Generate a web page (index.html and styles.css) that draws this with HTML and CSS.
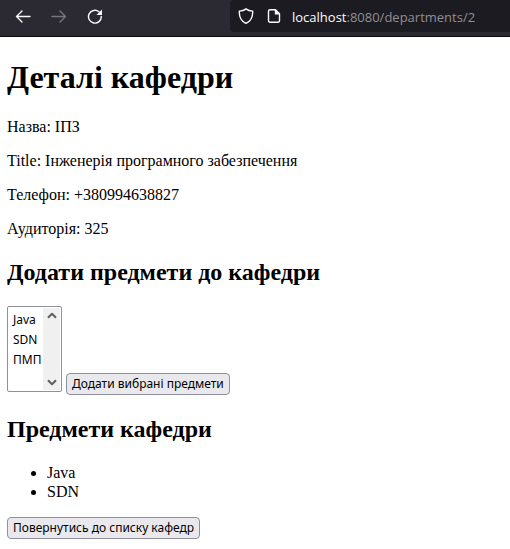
FILE: index.html
```html
<!DOCTYPE html>
<html lang="uk">
<head>
<meta charset="utf-8">
<title>Деталі кафедри</title>
<link rel="stylesheet" href="styles.css">
</head>
<body>
<header class="toolbar">
  <nav class="nav-buttons">
    <button type="button" class="nav-button" aria-label="Назад">
      <svg viewBox="0 0 16 16"><path d="M15 8.5H1.5M7 3L1.5 8.5L7 14"/></svg>
    </button>
    <button type="button" class="nav-button" aria-label="Вперед" disabled>
      <svg viewBox="0 0 16 16"><path d="M1 8.5H14.5M9 3L14.5 8.5L9 14"/></svg>
    </button>
    <button type="button" class="nav-button" aria-label="Оновити">
      <svg viewBox="0 0 16 16"><path d="M14.3 8.5A6.4 6.4 0 1 1 12 3.8"/><path class="solid" d="M15 1.5V7H9.5Z"/></svg>
    </button>
  </nav>
  <div class="address-bar">
    <svg class="address-icon" viewBox="0 0 16 16"><path d="M8 .9C6.300 2.300 3.900 3 1.300 3.100C1.100 8.500 2.800 13 8 15.400C13.200 13 14.900 8.500 14.700 3.100C12.100 3 9.700 2.300 8 .9Z"/></svg>
    <svg class="address-icon" viewBox="0 0 16 16"><path d="M9.500 1.700H4A1.500 1.500 0 0 0 2.500 3.200V12.800A1.500 1.500 0 0 0 4 14.300H12A1.500 1.500 0 0 0 13.500 12.800V5.700Z"/><path class="solid" d="M8.800 1.500V6.500H13.800Z"/></svg>
    <span class="url"><span class="host">localhost</span>:8080/departments/2</span>
  </div>
</header>
<main class="page">
  <h1>Деталі кафедри</h1>
  <p>Назва: ІПЗ</p>
  <p>Title: Інженерія програмного забезпечення</p>
  <p>Телефон: +380994638827</p>
  <p>Аудиторія: 325</p>
  <h2 id="add-title">Додати предмети до кафедри</h2>
  <form class="add-form">
    <div class="list-box">
      <select class="subjects" multiple size="4" aria-labelledby="add-title">
        <option>Java</option>
        <option>SDN</option>
        <option>ПМП</option>
      </select>
      <div class="scroll-track" aria-hidden="true">
        <svg viewBox="0 0 10 7"><path d="M1 5.800L5 1.800L9 5.800"/></svg>
        <svg viewBox="0 0 10 7"><path d="M1 1.200L5 5.200L9 1.200"/></svg>
      </div>
    </div>
    <button type="button" class="button">Додати вибрані предмети</button>
  </form>
  <h2>Предмети кафедри</h2>
  <ul>
    <li>Java</li>
    <li>SDN</li>
  </ul>
  <button type="button" class="button">Повернутись до списку кафедр</button>
</main>
</body>
</html>
```
FILE: styles.css
```css
* {
  box-sizing: border-box;
}

body {
  margin: 0;
  background: #fff;
  color: #000;
  font: 16px/18px "Liberation Serif", "Times New Roman", serif;
}

.toolbar {
  display: flex;
  justify-content: space-between;
  height: 37px;
  padding-left: 15px;
  background: #2b2a33;
  border-bottom: 1px solid #0c0c0d;
}

.nav-buttons {
  display: flex;
  align-items: center;
  gap: 20px;
  padding-bottom: 4px;
}

.nav-button {
  width: 16px;
  height: 16px;
  padding: 0;
  border: 0;
  background: none;
  color: #fbfbfe;
}

.nav-button:disabled {
  color: #77767d;
}

svg {
  display: block;
  fill: none;
  stroke: currentColor;
  stroke-width: 1.4;
  stroke-linecap: round;
  stroke-linejoin: round;
}

.solid {
  fill: currentColor;
  stroke-width: 0;
}

.address-bar {
  display: flex;
  align-items: center;
  gap: 12px;
  flex: 0 0 280px;
  height: 32px;
  padding-left: 8px;
  background: #1c1b22;
  border-radius: 4px 0 0 4px;
  color: #fbfbfe;
}

.address-icon {
  width: 16px;
  height: 16px;
}

.url {
  padding-top: 2px;
  color: #8f8f96;
  font: 13px/18px "Open Sans", sans-serif;
  margin-left: -2px;
}

.host {
  color: #fbfbfe;
}

.page {
  padding: 22px 7px 10px;
}

h1 {
  margin: 0 0 22px;
  font-size: 32px;
  line-height: 37px;
}

p {
  margin: 0 0 16px;
}

h2 {
  margin: 20px 0;
  font-size: 24px;
  line-height: 28px;
}

.add-form {
  display: flex;
  align-items: flex-end;
  gap: 4px;
  padding-bottom: 3px;
}

.list-box {
  display: flex;
  height: 86px;
  padding: 1px;
  border: 1px solid #8f8f9d;
  border-radius: 2px;
}

.subjects {
  width: 34px;
  padding: 3px 0 0;
  overflow: hidden;
  border: 0;
  outline: 0;
  background: #fff;
  color: #000;
  font: 12px/20px "Noto Sans", sans-serif;
}

.subjects option {
  min-height: 20px;
  padding: 0 0 0 4px;
  line-height: 20px;
}

.scroll-track {
  display: flex;
  flex-direction: column;
  justify-content: space-between;
  align-items: center;
  width: 17px;
  padding: 4px 0;
  background: #f0f0f0;
  color: #606060;
}

.scroll-track svg {
  width: 10px;
  height: 7px;
  stroke-width: 2;
  stroke-linecap: butt;
}

.button {
  height: 22px;
  padding: 0 5px;
  border: 1px solid #8f8f9d;
  border-radius: 4px;
  background: #e9e9ed;
  color: #000;
  font: 12px/20px "Noto Sans", sans-serif;
}

.add-form .button {
  margin-bottom: -3px;
}

ul {
  margin: 0 0 16px;
  padding-left: 40px;
  line-height: 19px;
}
```
